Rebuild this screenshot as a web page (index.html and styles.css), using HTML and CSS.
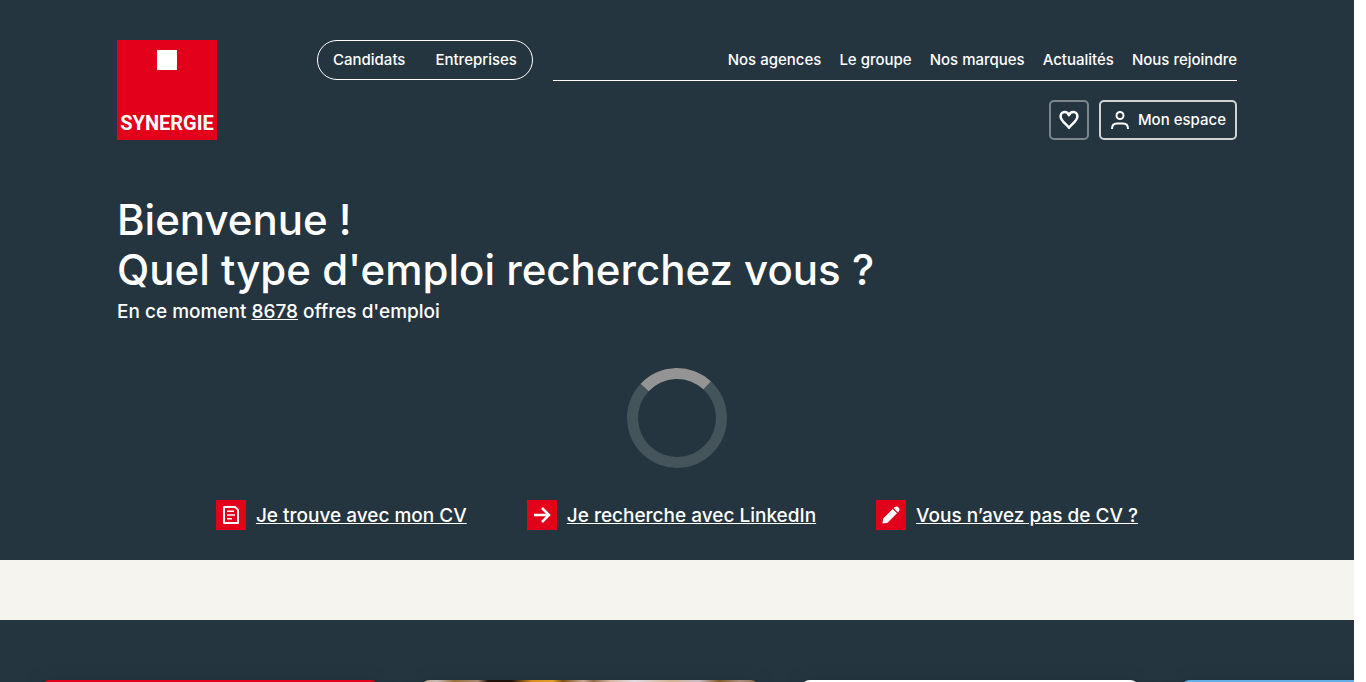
FILE: index.html
```html
<!DOCTYPE html>
<html lang="fr">
<head>
<meta charset="UTF-8">
<title>Synergie</title>
<meta name="viewport" content="width=device-width, initial-scale=1">
<link rel="stylesheet" href="styles.css">
</head>
<body>
<div class="page">

<div class="hero">
	<header class="header container">
		<a href="#" class="logo">
			<span class="logo-square"></span>
			<span class="logo-name">SYNERGIE</span>
		</a>
		<div class="header-main">
			<div class="header-top">
				<nav class="switch">
					<a href="#">Candidats</a>
					<a href="#">Entreprises</a>
				</nav>
				<nav class="menu">
					<a href="#">Nos agences</a>
					<a href="#">Le groupe</a>
					<a href="#">Nos marques</a>
					<a href="#">Actualités</a>
					<a href="#">Nous rejoindre</a>
				</nav>
			</div>
			<div class="header-actions">
				<button type="button" class="btn btn-fav" aria-label="Favoris">
					<svg class="heart" width="20" height="20" viewBox="0 0 20 20"><path d="M10 17.700C7.500 14.200 1.600 11 1.600 6.500C1.600 3.900 3.300 2 5.600 2C7.700 2 9.300 3.300 10 5.200C10.700 3.300 12.300 2 14.400 2C16.700 2 18.400 3.900 18.400 6.500C18.400 11 12.500 14.200 10 17.700Z"/></svg>
				</button>
				<button type="button" class="btn btn-account">
					<svg width="20" height="20" viewBox="0 0 20 20"><circle cx="10" cy="5.500" r="3.500"/><path d="M2 19C2 15.600 4 13.600 7 13.600H13C16 13.600 18 15.600 18 19"/></svg>
					Mon espace
				</button>
			</div>
		</div>
	</header>

	<main class="container">
		<h1 class="title">Bienvenue !<br>Quel type d'emploi recherchez vous ?</h1>
		<p class="count">En ce moment <a href="#">8678</a> offres d'emploi</p>

		<div class="loader" role="status" aria-label="Chargement"></div>

		<div class="shortcuts">
			<a href="#" class="shortcut">
				<span class="shortcut-icon">
					<svg class="doc" width="18" height="20" viewBox="0 0 18 20"><path d="M2 1.900H13L16 4.900V18.100H2Z"/><path class="doc-lines" d="M5 6.200H12 M5 10H13 M5 13.800H10"/></svg>
				</span>
				<span class="shortcut-text">Je trouve avec mon CV</span>
			</a>
			<a href="#" class="shortcut">
				<span class="shortcut-icon">
					<svg class="arrow" width="18" height="18" viewBox="0 0 18 18"><path d="M1 9H16 M9 2L16 9L9 16"/></svg>
				</span>
				<span class="shortcut-text">Je recherche avec LinkedIn</span>
			</a>
			<a href="#" class="shortcut">
				<span class="shortcut-icon">
					<svg class="pen" width="18" height="18" viewBox="0 0 18 18"><path d="M.5 17.500L1 13.500Q1.200 12.500 2 11.700L10.700 3L15 7.300L6.300 16Q5.500 16.800 4.500 17Z M11.600 2.100L12.600 1.200C14 0 15.500 .3 16.600 1.400C17.700 2.500 18 4 16.800 5.400L15.900 6.400Z"/></svg>
				</span>
				<span class="shortcut-text">Vous n’avez pas de CV ?</span>
			</a>
		</div>
	</main>
</div>

<div class="band"></div>

<section class="cards">
	<div class="card card-red"></div>
	<div class="card card-photo"></div>
	<div class="card card-white"></div>
	<div class="card card-blue"></div>
</section>

</div>
</body>
</html>
```
FILE: styles.css
```css
* {
	box-sizing: border-box;
}

html {
	background: #fff;
}

body {
	margin: 0 12px 0 0;
	font: 500 15px/20px Inter, "Noto Sans", sans-serif;
	color: #fff;
}

a {
	color: inherit;
	text-decoration: none;
}

.page {
	display: flex;
	flex-direction: column;
	height: 100vh;
	overflow: hidden;
}

.container {
	max-width: 1120px;
	margin: 0 auto;
}

.hero {
	flex: none;
	padding: 40px 0 28px;
	background: #253540;
}

/* header */
.header {
	display: flex;
	gap: 100px;
}

.logo {
	display: flex;
	flex-direction: column;
	align-items: center;
	justify-content: space-between;
	flex: none;
	width: 100px;
	height: 100px;
	padding: 10px 0 5px;
	background: #e2001a;
}

.logo-square {
	width: 20px;
	height: 20px;
	background: #fff;
}

.logo-name {
	font: bold 20px/24px Roboto, "Liberation Sans", sans-serif;
}

.header-main {
	flex: 1;
}

.header-top {
	display: flex;
	gap: 20px;
}

.switch {
	display: flex;
	align-items: center;
	gap: 30px;
	height: 40px;
	padding: 0 15px;
	border: 1px solid #fff;
	border-radius: 20px;
}

.menu {
	display: flex;
	flex: 1;
	align-items: center;
	justify-content: flex-end;
	gap: 18px;
	height: 41px;
	border-bottom: 1px solid #fff;
}

.header-actions {
	display: flex;
	justify-content: flex-end;
	gap: 10px;
	margin-top: 19px;
}

.btn {
	display: flex;
	align-items: center;
	justify-content: center;
	gap: 8px;
	height: 40px;
	padding: 0 9px;
	border: 2px solid #d1d3d2;
	border-radius: 5px;
	background: none;
	color: #fff;
	font: inherit;
}

.btn svg {
	flex: none;
	fill: none;
	stroke: #fff;
	stroke-width: 2;
}

.btn .heart {
	stroke-width: 2.5;
	stroke-linejoin: round;
}

.btn-fav {
	width: 40px;
	padding: 0;
	border-color: #7d868c;
}

/* search */
.title {
	margin: 55px 0 0;
	font-size: 42px;
	line-height: 50px;
	font-weight: 500;
}

.count {
	margin: 5px 0 0;
	font-size: 19px;
	line-height: 24px;
}

.count a {
	text-decoration: underline;
}

.loader {
	width: 100px;
	height: 100px;
	margin: 44px auto 32px;
	border: 11px solid #45545b;
	border-top-color: #949494;
	border-radius: 50%;
	transform: rotate(-2deg);
}

.shortcuts {
	display: flex;
	justify-content: center;
	gap: 60px;
}

.shortcut {
	display: flex;
	align-items: flex-start;
	gap: 10px;
	font-size: 19px;
	line-height: 32px;
}

.shortcut-text {
	text-decoration: underline;
}

.shortcut-icon {
	display: flex;
	align-items: center;
	justify-content: center;
	width: 30px;
	height: 30px;
	background: #e2001a;
}

.shortcut-icon svg {
	fill: none;
	stroke: #fff;
	stroke-width: 2;
}

.shortcut-icon .doc {
	stroke-linejoin: round;
}

.shortcut-icon .doc-lines {
	stroke-width: 1.5;
}

.shortcut-icon .arrow {
	stroke-width: 2.5;
}

.shortcut-icon .pen {
	fill: #fff;
	stroke: none;
}

/* cards */
.band {
	flex: none;
	height: 60px;
	background: #f6f4ee;
}

.cards {
	display: flex;
	flex: 1;
	gap: 40px;
	padding: 60px 0 0 40px;
	overflow: hidden;
	background: #253540;
}

.card {
	flex: none;
	width: 340px;
	height: 400px;
	border-radius: 10px;
	box-shadow: 0 0 20px rgba(0, 0, 0, 0.1);
}

.card-red {
	background: #e2001a;
}

.card-photo {
	background: linear-gradient(90deg, #c9a983 0, #c6b9b8 5%, #97713a 10%, #a98a74 17%, #1e1209 20%, #1e1209 27%, #d98e1c 33%, #dfa02a 39%, #7d5114 42%, #c9a995 48%, #8f6a48 51%, #d6b8a0 56%, #dfdbe2 63%, #d0b493 74%, #c9bcc4 82%, #7d5a26 88%, #a98f7c 94%, #8a6d4c 100%);
}

.card-white {
	background: #fff;
}

.card-blue {
	background: #62aee6;
}
```
